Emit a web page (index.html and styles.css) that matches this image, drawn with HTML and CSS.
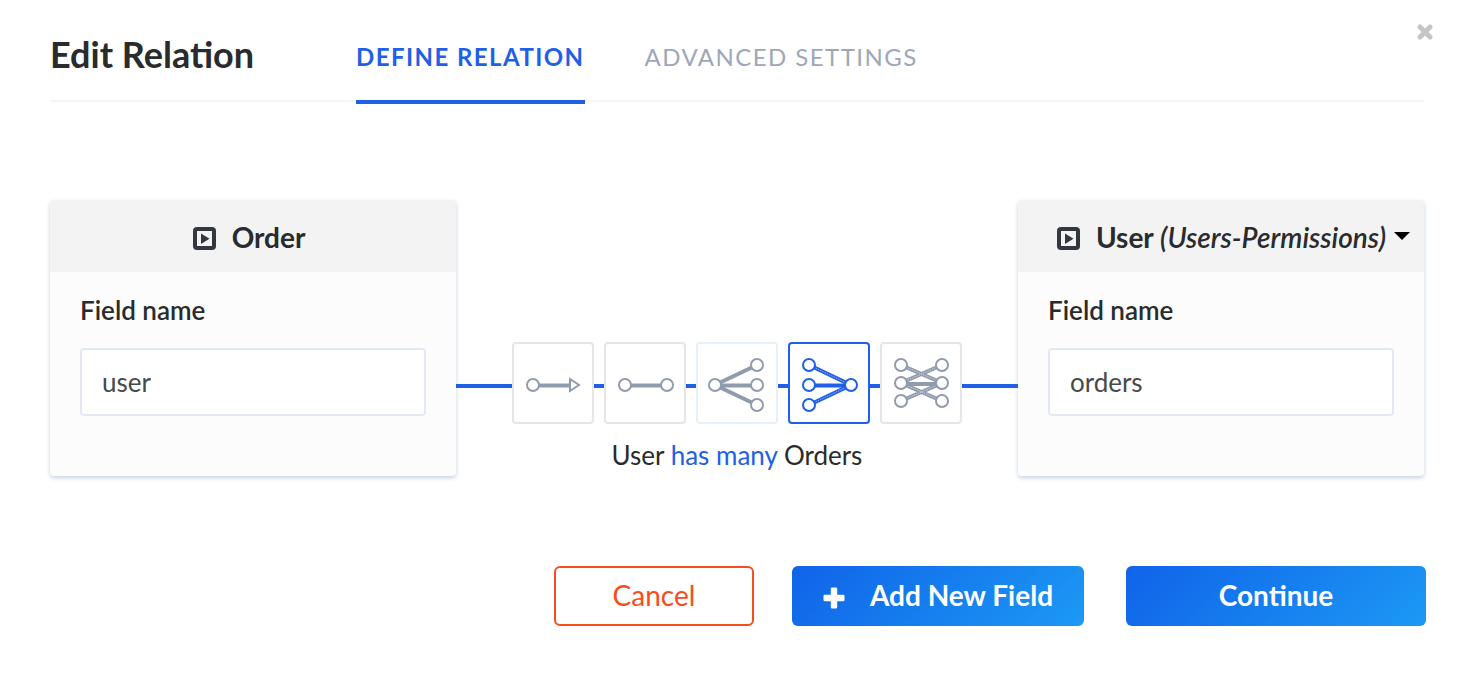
FILE: index.html
```html
<!DOCTYPE html>
<html lang="en">
<head>
<meta charset="utf-8">
<title>Edit Relation</title>
<link rel="stylesheet" href="styles.css">
</head>
<body>
<main class="modal">
  <button class="close" type="button" aria-label="Close">
    <svg width="18" height="18" viewBox="0 0 18 18"><path d="M4 4L14 14M14 4L4 14"/></svg>
  </button>
  <header class="header">
    <h1 class="title">Edit Relation</h1>
    <nav class="tabs">
      <a class="tab tab-active" href="#define">DEFINE RELATION</a>
      <a class="tab" href="#advanced">ADVANCED SETTINGS</a>
    </nav>
  </header>

  <section class="relation">
    <div class="card">
      <div class="card-head">
        <svg class="model-icon" width="23" height="23" viewBox="0 0 23 23"><rect x="2" y="2" width="19" height="19" rx="2"/><path d="M8 6.5V17L16.5 11.7Z"/></svg>
        <span>Order</span>
      </div>
      <div class="card-body">
        <label class="label" for="left-field">Field name</label>
        <input class="input" id="left-field" type="text" value="user">
      </div>
    </div>

    <div class="links">
      <div class="kinds">
        <button class="kind" type="button" aria-label="One way">
          <svg viewBox="2 2 78 78"><path class="halo" d="M27 43.5H57"/><path class="bar" d="M27 43.5H57"/><circle cx="21" cy="43" r="6"/><path class="node" d="M58 37V49L67 43Z"/></svg>
        </button>
        <button class="kind" type="button" aria-label="One to one">
          <svg viewBox="2 2 78 78"><path class="halo" d="M27 43.5H57"/><path class="bar" d="M27 43.5H57"/><circle cx="21" cy="43" r="6"/><circle cx="63" cy="43" r="6"/></svg>
        </button>
        <button class="kind kind-hover" type="button" aria-label="One to many">
          <svg viewBox="2 2 78 78"><path class="halo" d="M19 43.5H61"/><path class="bar" d="M19 43.5H61"/><path class="spoke" d="M61 23L19 43L61 63"/><circle cx="19" cy="43" r="6"/><circle cx="61" cy="23" r="6"/><circle cx="61" cy="43" r="6"/><circle cx="61" cy="63" r="6"/></svg>
        </button>
        <button class="kind kind-active" type="button" aria-label="Many to one" aria-pressed="true">
          <svg viewBox="2 2 78 78"><path class="halo" d="M21 43.5H63"/><path class="bar" d="M21 43.5H63"/><path class="spoke" d="M21 23L63 43L21 63"/><path class="core" d="M21 23L63 43L21 63"/><circle cx="21" cy="23" r="6"/><circle cx="21" cy="43" r="6"/><circle cx="21" cy="63" r="6"/><circle cx="63" cy="43" r="6"/></svg>
        </button>
        <button class="kind" type="button" aria-label="Many to many">
          <svg viewBox="2 2 78 78"><path class="spoke" d="M21 23L62 41L21 59M62 23L21 41L62 59"/><path class="core" d="M21 23L62 41L21 59M62 23L21 41L62 59"/><path class="spoke" d="M21 42H62"/><circle cx="21" cy="23" r="6"/><circle cx="21" cy="41" r="6"/><circle cx="21" cy="59" r="6"/><circle cx="62" cy="23" r="6"/><circle cx="62" cy="41" r="6"/><circle cx="62" cy="59" r="6"/></svg>
        </button>
      </div>
      <p class="sentence">User <span class="verb">has many</span> Orders</p>
    </div>

    <div class="card">
      <button class="card-head card-select" type="button" aria-haspopup="listbox">
        <svg class="model-icon" width="23" height="23" viewBox="0 0 23 23"><rect x="2" y="2" width="19" height="19" rx="2"/><path d="M8 6.5V17L16.5 11.7Z"/></svg>
        <span>User <em class="plugin">(Users-Permissions)</em></span>
        <svg class="caret" width="16" height="12" viewBox="0 0 16 12"><path d="M0 0H16L8 8Z"/></svg>
      </button>
      <div class="card-body">
        <label class="label" for="right-field">Field name</label>
        <input class="input" id="right-field" type="text" value="orders">
      </div>
    </div>
  </section>

  <footer class="footer">
    <button class="btn btn-cancel" type="button">Cancel</button>
    <button class="btn btn-primary btn-add" type="button">
      <svg width="22" height="22" viewBox="0 0 22 22"><path d="M9 0.5H13Q14.2 0.5 14.2 1.7V7.8H20.3Q21.5 7.8 21.5 9V13Q21.5 14.2 20.3 14.2H14.2V20.3Q14.2 21.5 13 21.5H9Q7.8 21.5 7.8 20.3V14.2H1.7Q0.5 14.2 0.5 13V9Q0.5 7.8 1.7 7.8H7.8V1.7Q7.8 0.5 9 0.5Z"/></svg>
      <span>Add New Field</span>
    </button>
    <button class="btn btn-primary btn-continue" type="button">Continue</button>
  </footer>
</main>
</body>
</html>
```
FILE: styles.css
```css
* { box-sizing: border-box; }

body {
  margin: 0;
  background: #fff;
  color: #292b2c;
  font-family: Lato, sans-serif;
  font-size: 26px;
}

button, input { font: inherit; color: inherit; margin: 0; }
button { cursor: pointer; }

.modal { position: relative; padding: 0 48px 50px 50px; }

.close {
  position: absolute;
  top: 23px;
  right: 38px;
  display: flex;
  padding: 0;
  border: 0;
  background: none;
}
.close path { stroke: #c3c5c8; stroke-width: 5; stroke-linecap: round; }

.header {
  display: flex;
  align-items: flex-start;
  height: 102px;
  border-bottom: 2px solid #f6f6f6;
}
.title {
  flex: none;
  width: 306px;
  margin: 0;
  padding-top: 32px;
  font-size: 36px;
  line-height: 44px;
  font-weight: 700;
}
.tabs { display: flex; gap: 60px; }
.tab {
  height: 104px;
  padding-top: 42px;
  font-size: 24px;
  line-height: 30px;
  letter-spacing: 0.06em;
  color: #9ea7b8;
  text-decoration: none;
}
.tab-active {
  border-bottom: 4px solid #1f60e6;
  color: #1f60e6;
  font-weight: 700;
}

.relation { display: flex; align-items: flex-start; padding-top: 98px; }

.card {
  flex: none;
  width: 406px;
  min-height: 276px;
  border-radius: 4px;
  background: #fcfcfc;
  box-shadow: 0 2px 4px #c8d2e2;
}
.card-head {
  display: flex;
  align-items: center;
  justify-content: center;
  gap: 16px;
  width: 100%;
  height: 72px;
  padding: 4px 8px 0 0;
  border: 0;
  border-radius: 4px 4px 0 0;
  background: #f3f3f3;
  font-size: 28px;
  font-weight: 700;
}
.card-head span { padding-bottom: 2px; }
.card-select { justify-content: flex-end; padding-right: 14px; }
.card-select .caret { margin-left: -8px; }
.plugin { font-weight: 600; }
.model-icon rect { fill: none; stroke: #333740; stroke-width: 4; }
.model-icon path { fill: #333740; }
.card-body { padding: 22px 30px 60px; }
.label { display: block; line-height: 32px; font-weight: 600; }
.input {
  display: block;
  width: 100%;
  height: 68px;
  margin-top: 22px;
  padding: 0 20px;
  border: 2px solid #e3e9f3;
  border-radius: 4px;
  background: #fff;
  color: #464a4c;
}

.links { position: relative; flex: 1; padding-top: 142px; }
.links::before {
  content: "";
  position: absolute;
  top: 184px;
  left: 0;
  right: 0;
  height: 4px;
  background: #1f60e6;
}
.kinds { position: relative; display: flex; justify-content: center; gap: 10px; }
.kind {
  width: 82px;
  height: 82px;
  padding: 0;
  border: 2px solid #e6e6e6;
  border-radius: 4px;
  background: #fff;
  color: #919bae;
}
.kind-hover { border-color: #e6f0fb; }
.kind-active { border-color: #1f60e6; color: #1f60e6; }
.kind svg { display: block; width: 78px; height: 78px; fill: none; stroke: currentColor; }
.kind circle, .kind .node { fill: #fff; stroke-width: 2; }
.kind .halo { stroke-width: 5; opacity: .5; }
.kind .bar { stroke-width: 3; }
.kind .spoke { stroke-width: 4; }
.kind .core { stroke: #fff; stroke-width: 1; stroke-dasharray: 1 1; opacity: .6; }

.sentence { margin: 15px 0 0; line-height: 32px; text-align: center; }
.verb { color: #1f60e6; }

.footer { display: flex; justify-content: flex-end; padding-top: 90px; margin-right: -2px; }
.btn {
  height: 60px;
  padding: 0 0 2px;
  border: 0;
  border-radius: 6px;
  font-size: 28px;
}
.btn-cancel {
  width: 200px;
  margin-right: 38px;
  border: 2px solid #f64d20;
  background: #fff;
  color: #f64d20;
}
.btn-primary {
  background: linear-gradient(135deg, #1063e8, #1c99f5);
  color: #fff;
  font-weight: 700;
}
.btn-add {
  display: flex;
  align-items: center;
  justify-content: center;
  gap: 25px;
  width: 292px;
  margin-right: 42px;
}
.btn-add svg { fill: #fff; margin-top: 5px; }
.btn-continue { width: 300px; }
```
